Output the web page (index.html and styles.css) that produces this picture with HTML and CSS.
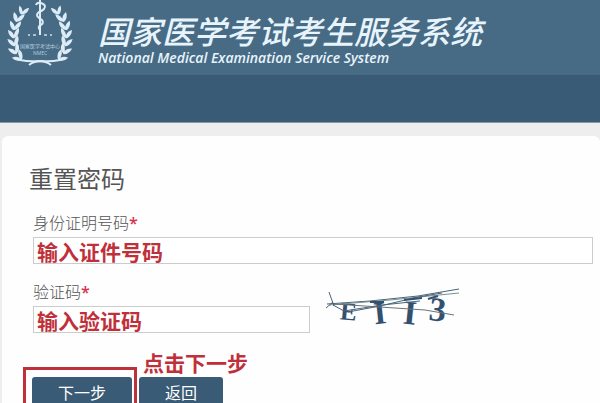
FILE: index.html
```html
<!DOCTYPE html>
<html lang="zh-CN">
<head>
    <meta charset="UTF-8">
    <meta name="viewport" content="width=device-width, initial-scale=1.0">
    <title>国家医学考试考生服务系统</title>
    <link rel="stylesheet" href="styles.css">
</head>
<body>
    <header class="site-header">
        <svg class="logo" viewBox="0 0 80 70" aria-hidden="true">
            <defs>
                <path id="leaf" d="M0 5 Q-6 3 -7 -4 Q-2 -3 0 1 Q1 -5 5 -7 Q7 1 0 5Z"/>
                <g id="branch">
                    <use href="#leaf" transform="translate(23 11) rotate(28) scale(0.8)"/>
                    <use href="#leaf" transform="translate(18 18) rotate(26) scale(0.9)"/>
                    <use href="#leaf" transform="translate(15 26) rotate(18) scale(0.9)"/>
                    <use href="#leaf" transform="translate(14 34) rotate(4) scale(0.9)"/>
                    <use href="#leaf" transform="translate(14 42) rotate(-6) scale(0.9)"/>
                    <use href="#leaf" transform="translate(15 50) rotate(-18) scale(0.9)"/>
                    <use href="#leaf" transform="translate(19 57) rotate(-36) scale(0.9)"/>
                    <path d="M20 60 Q30 62 38 61 Q46 61 51 65" fill="none" stroke="#dcebf5" stroke-width="2"/>
                </g>
            </defs>
            <g fill="#dcebf5">
                <use href="#branch"/>
                <use href="#branch" transform="translate(80 0) scale(-1 1)"/>
            </g>
            <path d="M40 0 V35" stroke="#dcebf5" stroke-width="2"/>
            <path d="M36 5 Q37 2 41 3 Q47 5 44 9 Q42 11 39 12 Q35 15 39 18 L42 20 Q44 23 41 25 Q37 27 40 30" fill="none" stroke="#dcebf5" stroke-width="2"/>
            <path d="M28 35h2M33 35h3M44 35h3M50 35h2" stroke="#a9c3d4" stroke-width="2"/>
            <text x="40" y="48" font-size="5">国家医学考试中心</text>
            <text x="40" y="55" font-size="5">NMEC</text>
        </svg>
        <div class="site-title">
            <h1>国家医学考试考生服务系统</h1>
            <p>National Medical Examination Service System</p>
        </div>
    </header>
    <nav class="nav-bar"></nav>

    <main class="card">
        <h2>重置密码</h2>
        <form id="resetForm">
            <div class="input-group">
                <label for="idNumber">身份证明号码<span class="required">*</span></label>
                <input type="text" id="idNumber" value="输入证件号码">
            </div>

            <div class="captcha-row">
                <div class="input-group">
                    <label for="captcha">验证码<span class="required">*</span></label>
                    <input type="text" id="captcha" value="输入验证码">
                </div>
                <svg class="captcha" viewBox="0 0 136 42" role="img" aria-label="验证码">
                    <g class="captcha-text">
                        <text x="14" y="32" font-size="25" transform="rotate(5 22 26)">E</text>
                        <text x="48" y="36" font-size="32" transform="rotate(-6 52 28)">I</text>
                        <text x="77" y="36" font-size="34" transform="rotate(6 82 28)">I</text>
                        <text x="103" y="33" font-size="34" transform="rotate(6 111 24)">3</text>
                    </g>
                    <g fill="none" stroke="#49637a">
                        <path d="M1 16 L44 13 L92 8 L133 1"/>
                        <path d="M3 17 L64 12 L133 5" stroke="#77908f"/>
                        <path d="M0 20 L7 14 M3 4 L8 18 M7 17 L18 23 L56 17 L94 13"/>
                        <path d="M8 16 L54 19 L99 22 L128 27" stroke="#6b737c"/>
                        <path d="M22 24 L54 18 L92 9 L116 5"/>
                        <path d="M44 14 L58 14 M78 12 L96 10 M102 11 L112 8" stroke="#34506f" stroke-width="2"/>
                    </g>
                </svg>
            </div>

            <div class="actions">
                <div class="highlight">
                    <button type="submit" class="btn btn-next">下一步</button>
                </div>
                <div class="back">
                    <p class="note">点击下一步</p>
                    <button type="button" class="btn btn-back">返回</button>
                </div>
            </div>
        </form>
    </main>
</body>
</html>
```

FILE: styles.css
```css
* {
    margin: 0;
    padding: 0;
    box-sizing: border-box;
    font-family: "Open Sans", "Noto Sans CJK SC", sans-serif;
}

body {
    background-color: #eeeeef;
    color: #555;
}

.site-header {
    display: flex;
    height: 75px;
    background-color: #476b85;
}

.logo {
    width: 80px;
    height: 70px;
    flex-shrink: 0;
}

.logo text {
    fill: #b5cddd;
    text-anchor: middle;
}

.site-title {
    padding: 16px 0 0 18px;
    color: #e8f4fc;
    font-style: italic;
    white-space: nowrap;
}

.site-title h1 {
    font-size: 32px;
    font-weight: 500;
    line-height: 32px;
}

.site-title p {
    font-size: 14px;
    font-weight: 600;
    line-height: 20px;
}

.nav-bar {
    height: 48px;
    background-color: #3a5b75;
    border-bottom: 1px solid #8798a6;
}

.card {
    margin: 13px 0 0 2px;
    padding: 27px 7px 24px 31px;
    background-color: #fefefe;
    border-radius: 6px;
}

.card h2 {
    margin-left: -4px;
    font-size: 24px;
    font-weight: 400;
    line-height: 32px;
}

.input-group {
    margin-top: 17px;
}

.input-group label {
    display: block;
    font-size: 16px;
    font-weight: 300;
    line-height: 22px;
}

.required {
    color: #d9304a;
    font-weight: 600;
}

.input-group input {
    display: block;
    width: 100%;
    height: 27px;
    margin-top: 3px;
    padding: 0 3px;
    border: 1px solid #ccc;
    background-color: #fff;
    color: #c0303a;
    font-size: 21px;
    font-weight: 700;
}

.captcha-row {
    display: flex;
    align-items: center;
    gap: 16px;
}

.captcha-row .input-group {
    width: 277px;
}

.captcha {
    width: 136px;
    height: 42px;
    margin-top: 20px;
    overflow: visible;
}

.captcha-text text {
    fill: #34506f;
    font-family: "Liberation Serif", serif;
    font-weight: 700;
}

.actions {
    display: flex;
    align-items: flex-start;
    gap: 2px;
    margin: 18px 0 0 -10px;
}

.highlight {
    margin-top: 16px;
    padding: 7px 2px 7px 6px;
    border: 3px solid #c0303a;
}

.note {
    margin-bottom: 2px;
    padding-left: 4px;
    color: #c0303a;
    font-size: 21px;
    font-weight: 700;
    line-height: 24px;
}

.btn {
    display: block;
    height: 30px;
    border: none;
    border-radius: 3px;
    background-color: #3a5b75;
    color: #fff;
    font-size: 16px;
    cursor: pointer;
}

.btn-next {
    width: 100px;
}

.btn-back {
    width: 84px;
}
```
